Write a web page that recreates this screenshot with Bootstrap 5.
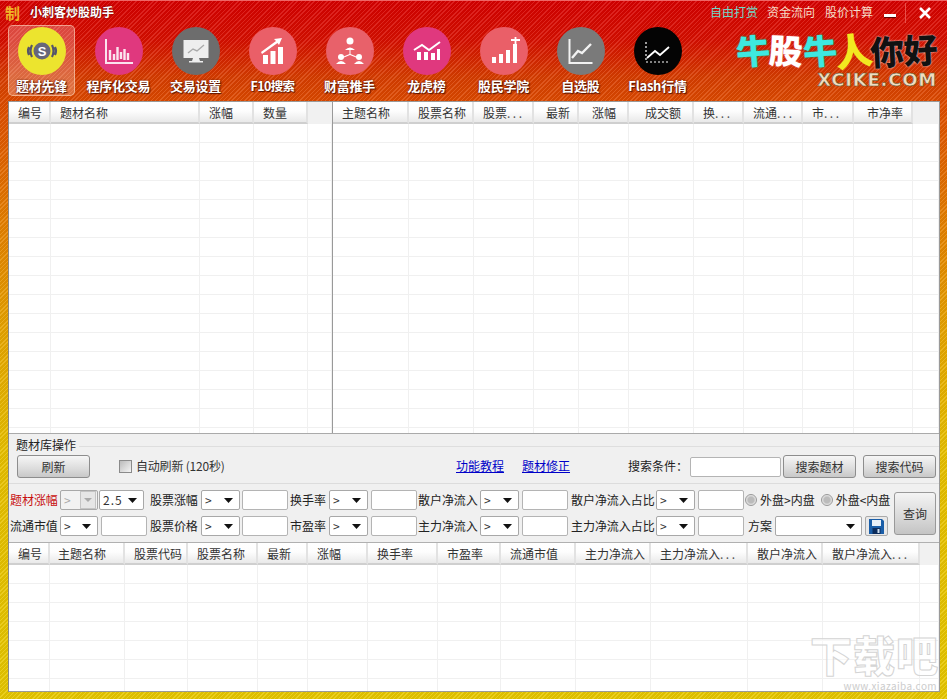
<!DOCTYPE html>
<html lang="zh-CN">
<head>
<meta charset="utf-8">
<title>小刺客炒股助手</title>
<link rel="stylesheet" href="https://cdn.jsdelivr.net/npm/bootstrap@5.3.0/dist/css/bootstrap.min.css">
<style>
html,body{margin:0;height:699px;overflow:hidden;background:#e8c800}
body{font-family:"Liberation Sans","Noto Sans CJK SC",sans-serif;font-size:12px;color:#222;line-height:1.2}
.cjk{font-family:"Noto Sans CJK SC","Liberation Sans",sans-serif}
.appwin{width:947px;height:699px;position:relative;border-top:1px solid #e66;
 background:repeating-linear-gradient(135deg,rgba(255,255,255,.12) 0 1px,rgba(0,0,0,.05) 1px 3px),linear-gradient(180deg,#d80000 0,#d81000 40px,#d83c00 75px,#e05000 110px,#e68000 220px,#e8a800 340px,#e8c000 450px,#e8c800 699px)}
.titlebar{height:23px;padding-left:5px;flex:none}
.titleglyph{width:17px;font-size:15px;font-weight:700;line-height:16px;color:#f0b428;white-space:nowrap}
.titletext{margin-left:8px;color:#fff;font-weight:700;font-size:12px;text-shadow:0 0 2px #400}
.toplink{color:#f5dcc8;margin-right:10px;font-size:12px;text-decoration:none}
.toplink.teal{color:#6fd8c8;margin-left:2px;margin-right:9px}
.winmin{width:12px;height:3px;background:#fff;margin-top:5px;margin-left:1px;box-shadow:0 1px 1px #500}
.winsep{width:1px;height:20px;background:#e8504a;margin-left:9px;margin-right:13px}
.toolbar{height:77px;padding-left:8px;flex:none}
.toolfirst{width:67px;height:71px;margin-top:1px;border-radius:5px;border:1px solid rgba(255,225,200,.55);background:rgba(255,235,225,.28)}
.toolfirst .iconsvg{margin-top:1px}
.toolitem{width:77px;height:71px;margin-top:1px;padding-top:2px}
.toolitem1{margin-left:5px}
.iconsvg{width:48px;height:48px;display:block;flex:none}
.toollabel{margin-top:3px;color:#fff;font-weight:700;font-size:13px;letter-spacing:-.25px;white-space:nowrap;text-shadow:0 0 2px #5a1500,1px 1px 1px #5a1500}
.toollabel.tight{letter-spacing:-.6px;font-size:12.500px}
.logobox{width:201px;margin-left:auto;height:72px;margin-right:10px;margin-top:6px}
.logorow{font-size:34px;font-weight:900;line-height:40px;letter-spacing:-.6px;white-space:nowrap}
.lg1{color:#3ee8e0;text-shadow:0 0 2px #0a6;display:inline-block;transform:rotate(-4deg)}
.lg2{color:#fff;text-shadow:0 0 2px #e77;display:inline-block;transform:rotate(3deg)}
.lg3{color:#f2e820;display:inline-block;transform:rotate(-8deg) scale(1.1)}
.lg4{color:#111;text-shadow:0 0 2px #fff;display:inline-block;transform:rotate(-3deg)}
.logosub{font-family:"DejaVu Sans",sans-serif;font-weight:700;font-size:18px;line-height:20px;color:#f0dcc0;letter-spacing:.8px;-webkit-text-stroke:.5px #553;text-align:right}
.mainpanel{width:932px;height:591px;margin-left:8px;background:#f0f0f0;border:1px solid #999;border-left-color:#888;flex:none}
.toppane{height:332px;border-bottom:1px solid #aaa;flex:none;background:#fff;overflow:hidden}
.paneleft{width:324px;border-right:1px solid #999;flex:none;overflow:hidden}
.paneright{width:606px;flex:none;overflow:hidden}
.gridtb.table{table-layout:fixed;margin:0;border-collapse:separate;border-spacing:0;--bs-table-bg:transparent;color:#333}
.gridtb.table>:not(caption)>*>*{padding:0;border:0;box-shadow:none}
.gridtb.table>thead>tr>th{height:22px;font-weight:400;font-size:12px;padding:2px 0 0 9px;white-space:nowrap;overflow:hidden;vertical-align:middle;background:linear-gradient(180deg,#fff 0,#fdfdfd 45%,#e9e9e9 100%);border-right:2px solid #e2e2e2;border-bottom:2px solid #cfcfcf}
.gridtb.table>thead>tr>th.blankhd{background:#f1f1f1;border-right:0;border-bottom:0}
.gridtb.table>tbody>tr>td{height:19px;border-right:1px solid #f0f0f0;border-bottom:1px solid #f0f0f0}
.gridtb.table>thead>tr>th.pl12{padding-left:12px}
.gridtb.table>thead>tr>th.pl13{padding-left:13px}
.gridtb.table>thead>tr>th.pl16{padding-left:16px}
.gridtb.table>thead>tr>th.pl8{padding-left:8px}
.dots{letter-spacing:2.500px;color:#555}
.opsbox{height:50px;border-bottom:1px solid #dcdcdc;flex:none}
.opshead{height:21px;padding:4px 0 0 7px;color:#222}
.opsline{height:1px;background:#dedede;margin:8px 0 0 3px}
.opsrow{height:23px;padding-left:8px;white-space:nowrap}
.flatbtn.btn{font-size:12px;padding:0;height:23px;width:73px;flex:none;color:#333;border:1px solid #8d8d8d;border-radius:3px;background:linear-gradient(180deg,#f6f6f6,#dcdcdc 60%,#c8c8c8);line-height:20px}
.chkbox.form-check-input{width:13px;height:13px;margin:0 4px 0 29px;border:1px solid #8a8a8a;border-radius:0;background:linear-gradient(135deg,#bbb,#f4f4f4);flex:none}
.autotxt{color:#333;width:88px;flex:none;letter-spacing:-.2px}
.opslink{color:#0000c8;text-decoration:underline;width:48px;flex:none}
.lk1{margin-left:232px}
.lk2{margin-left:18px}
.searchlbl{margin-left:58px;width:62px;flex:none;color:#222}
.txtinp.form-control{height:20px;min-height:0;padding:0 2px;border:1px solid #b4b4b4;border-radius:2px;font-size:12px;background:#fff;box-shadow:none}
.searchinp.form-control{width:91px;flex:none}
.sp2{margin-left:2px}.sp7{margin-left:7px}
.filterbox{height:58px;padding:6px 0 6px 1px;flex:none}
.filtergrid{display:grid;grid-template-columns:50px 90px 51px 39px 50px 39px 39px 50px 62px 39px 52px 85px 39px 50px 145px;grid-template-rows:20px 20px;row-gap:6px;align-items:center;white-space:nowrap}
.flbl{color:#222;letter-spacing:-.05px}
.flbl.redl{color:#c81010}
.minisel.form-select{height:20px;min-height:0;width:100%;padding:0 0 0 3px;font-size:12px;border:1px solid #a8a8a8;border-radius:2px;color:#333;box-shadow:none;
 background-color:#fff;background-position:right 6px center;background-size:9px 5px;background-repeat:no-repeat;
 background-image:url("data:image/svg+xml,%3Csvg xmlns='http://www.w3.org/2000/svg' viewBox='0 0 9 5'%3E%3Cpath d='M0 0h9L4.500 5z' fill='%23111'/%3E%3C/svg%3E")}
.minisel.form-select:disabled{background-color:#f2f2f2;color:#aaa;background-position:right 1px center;background-size:16px 18px;
 background-image:url("data:image/svg+xml,%3Csvg xmlns='http://www.w3.org/2000/svg' viewBox='0 0 16 18'%3E%3Crect x='.5' y='.5' width='15' height='17' fill='%23e6e6e6' stroke='%23c4c4c4'/%3E%3Cpath d='M4 7h8l-4 4z' fill='%23aaa'/%3E%3C/svg%3E")}
.selwide.form-select{width:45px;margin-left:1px;letter-spacing:1px;flex:none}
.selnarrow.form-select{width:38px;flex:none}
.firstcell{width:88px}
.inp46.form-control{width:46px;flex:none}
.inpl2{margin-left:2px}.inpl3{margin-left:3px}
.radbtn.form-check-input{width:12px;height:12px;margin:0 3px 0 0;border:1px solid #999;background:radial-gradient(circle,#bbb 0 40%,#e8e8e8 70%);flex:none}
.radbtn2.form-check-input{margin-left:6px}
.fanlbl{margin-left:3px;width:27px}
.planset.form-select{width:87px;flex:none}
.savebtn{width:23px;height:20px;margin-left:3px;border:1px solid #aaa;border-radius:2px;background:#e8e8e8;flex:none}
.querybtn.btn{width:42px;height:43px;margin:2px 0 0 4px;font-size:12px;padding:0;color:#333;border:1px solid #999;border-radius:3px;background:linear-gradient(180deg,#f4f4f4,#d8d8d8 60%,#c4c4c4);flex:none}
.botpane{border-top:1px solid #b0b0b0;background:#fff;overflow:hidden;flex:1 1 auto;min-height:0}
.wmark{right:0;bottom:0;width:134px;pointer-events:none;text-align:right}
.wmarktext{font-size:42px;font-weight:900;line-height:46px;height:46px;overflow:visible;color:rgba(255,255,255,.5);-webkit-text-stroke:1px #d4d4d4;white-space:nowrap;letter-spacing:1px}
.wmarkurl{font-size:10px;line-height:11px;margin-top:3px;color:#ccc;letter-spacing:.4px;white-space:nowrap;padding-right:2px}
</style>
</head>
<body>
<div class="appwin d-flex flex-column cjk">
  <div class="titlebar d-flex align-items-center">
    <span class="titleglyph">制</span>
    <span class="titletext">小刺客炒股助手</span>
    <div class="ms-auto d-flex align-items-center">
      <a class="toplink teal" href="#">自由打赏</a>
      <a class="toplink" href="#">资金流向</a>
      <a class="toplink" href="#">股价计算</a>
      <div class="winmin"></div>
      <div class="winsep"></div>
      <svg class="me-3" width="12" height="12" viewBox="0 0 12 12"><path d="M1 1l10 10M11 1L1 11" stroke="#fff" stroke-width="2.600"/></svg>
    </div>
  </div>

  <div class="toolbar d-flex align-items-start">
    <div class="toolfirst d-flex flex-column align-items-center">
      <svg class="iconsvg" viewBox="0 0 48 48"><circle cx="24" cy="24" r="24" fill="#ece42e"/><circle cx="24" cy="24" r="8.500" fill="#66667a"/><text x="24" y="28.500" text-anchor="middle" font-family="Liberation Sans" font-weight="700" font-size="13" fill="#fff">S</text><path d="M14 18q-3 6 0 12M11 20q-2 4 0 8M34 18q3 6 0 12M37 20q2 4 0 8" fill="none" stroke="#55556a" stroke-width="2.200"/></svg>
      <div class="toollabel">题材先锋</div>
    </div>
    <div class="toolitem toolitem1 d-flex flex-column align-items-center">
      <svg class="iconsvg" viewBox="0 0 48 48"><circle cx="24" cy="24" r="24" fill="#e0387e"/><path d="M11 12v24h27" fill="none" stroke="#fbe4ee" stroke-width="2"/><path d="M15 23v10M19 27v6M22.500 20v13M26 25v7M29.500 22v11M33 26v7" stroke="#fbe4ee" stroke-width="2.400"/></svg>
      <div class="toollabel">程序化交易</div>
    </div>
    <div class="toolitem d-flex flex-column align-items-center">
      <svg class="iconsvg" viewBox="0 0 48 48"><circle cx="24" cy="24" r="24" fill="#6d6d6d"/><rect x="11.500" y="13" width="25" height="18" fill="#eee"/><path d="M16 26l5-4 4 2 7-6" fill="none" stroke="#aaa" stroke-width="1.400"/><path d="M21 31h6l1 3h3v1.500H17V34h3z" fill="#eee"/></svg>
      <div class="toollabel">交易设置</div>
    </div>
    <div class="toolitem d-flex flex-column align-items-center">
      <svg class="iconsvg" viewBox="0 0 48 48"><circle cx="24" cy="24" r="24" fill="#ea5f68"/><path d="M14 28h5v9h-5zM21.500 24h5v13h-5zM29 20h5v17h-5z" fill="#fff"/><path d="M12 25l15-11-2-2 8-1-3 7-1.500-2L13 27z" fill="#fff"/></svg>
      <div class="toollabel tight">F10搜索</div>
    </div>
    <div class="toolitem d-flex flex-column align-items-center">
      <svg class="iconsvg" viewBox="0 0 48 48"><circle cx="24" cy="24" r="24" fill="#e8616a"/><circle cx="24" cy="14" r="3.500" fill="#fff"/><path d="M19 23q5-5 10 0zM23.500 23h1v4l7 3-.4 1-7.100-3-7.100 3-.4-1 7-3z" fill="#fff"/><circle cx="15" cy="30" r="3" fill="#fff"/><circle cx="33" cy="30" r="3" fill="#fff"/><path d="M10 37q5-6 10 0zM28 37q5-6 10 0z" fill="#fff"/></svg>
      <div class="toollabel">财富推手</div>
    </div>
    <div class="toolitem d-flex flex-column align-items-center">
      <svg class="iconsvg" viewBox="0 0 48 48"><circle cx="24" cy="24" r="24" fill="#e0387e"/><path d="M11 23l8-5 7 5 11-8" fill="none" stroke="#fff" stroke-width="2"/><path d="M14 25h4v8h-4zM21 25h4v8h-4zM28 26h4v7h-4zM34 22h3v11h-3z" fill="#fff"/></svg>
      <div class="toollabel">龙虎榜</div>
    </div>
    <div class="toolitem d-flex flex-column align-items-center">
      <svg class="iconsvg" viewBox="0 0 48 48"><circle cx="24" cy="24" r="24" fill="#ea5f68"/><path d="M12 30h4v6h-4zM19 27h4v9h-4zM26 23h4v13h-4zM33 17h4v19h-4z" fill="#fff"/><path d="M31 13h9M35.500 10v7" stroke="#fff" stroke-width="1.800"/></svg>
      <div class="toollabel">股民学院</div>
    </div>
    <div class="toolitem d-flex flex-column align-items-center">
      <svg class="iconsvg" viewBox="0 0 48 48"><circle cx="24" cy="24" r="24" fill="#7a7a7a"/><path d="M12.500 12v24h23" fill="none" stroke="#f2f2f2" stroke-width="2"/><path d="M15 31l6-7 4 2 9-9" fill="none" stroke="#f2f2f2" stroke-width="2.400"/></svg>
      <div class="toollabel">自选股</div>
    </div>
    <div class="toolitem d-flex flex-column align-items-center">
      <svg class="iconsvg" viewBox="0 0 48 48"><circle cx="24" cy="24" r="24" fill="#040404"/><path d="M12 15v20h24" fill="none" stroke="#fff" stroke-width="1.200" stroke-dasharray="2 2"/><path d="M13 31l8-7 5 4 9-8" fill="none" stroke="#fff" stroke-width="1.800"/></svg>
      <div class="toollabel">Flash行情</div>
    </div>
    <div class="logobox">
      <div class="logorow"><span class="lg1">牛</span><span class="lg2">股</span><span class="lg1">牛</span><span class="lg3">人</span><span class="lg4">你好</span></div>
      <div class="logosub">XCIKE.COM</div>
    </div>
  </div>

  <div class="mainpanel d-flex flex-column position-relative">
    <div class="toppane d-flex">
      <div class="paneleft">
        <table class="table gridtb" data-rows="17">
          <colgroup><col width="42"><col width="149"><col width="54"><col width="54"><col width="24"></colgroup>
          <thead><tr><th>编号</th><th>题材名称</th><th>涨幅</th><th>数量</th><th class="blankhd"></th></tr></thead>
          <tbody></tbody>
        </table>
      </div>
      <div class="paneright">
        <table class="table gridtb" data-rows="17">
          <colgroup><col width="76"><col width="65"><col width="60"><col width="45"><col width="50"><col width="65"><col width="50"><col width="59"><col width="51"><col width="59"><col width="26"></colgroup>
          <thead><tr><th>主题名称</th><th>股票名称</th><th>股票<span class="dots">...</span></th><th class="pl12">最新</th><th class="pl13">涨幅</th><th class="pl16">成交额</th><th>换<span class="dots">...</span></th><th>流通<span class="dots">...</span></th><th>市<span class="dots">...</span></th><th class="pl13">市净率</th><th class="blankhd"></th></tr></thead>
          <tbody></tbody>
        </table>
      </div>
    </div>

    <div class="opsbox">
      <div class="opshead d-flex"><span>题材库操作</span><div class="opsline flex-grow-1"></div></div>
      <div class="opsrow d-flex align-items-center">
        <button type="button" class="btn flatbtn">刷新</button>
        <input class="form-check-input chkbox" type="checkbox">
        <span class="autotxt">自动刷新 (120秒)</span>
        <a class="opslink lk1" href="#">功能教程</a>
        <a class="opslink lk2" href="#">题材修正</a>
        <span class="searchlbl">搜索条件：</span>
        <input class="form-control txtinp searchinp" type="text">
        <button type="button" class="btn flatbtn sp2">搜索题材</button>
        <button type="button" class="btn flatbtn sp7">搜索代码</button>
      </div>
    </div>

    <div class="filterbox d-flex">
      <div class="filtergrid">
        <span class="flbl redl">题材涨幅</span>
        <div class="d-flex firstcell"><select class="form-select minisel selnarrow" disabled><option>&gt;</option></select><select class="form-select minisel selwide"><option>2.5</option></select></div>
        <span class="flbl">股票涨幅</span>
        <select class="form-select minisel"><option>&gt;</option></select>
        <input class="form-control txtinp inp46 inpl2" type="text">
        <span class="flbl">换手率</span>
        <select class="form-select minisel"><option>&gt;</option></select>
        <input class="form-control txtinp inp46 inpl3" type="text">
        <span class="flbl">散户净流入</span>
        <select class="form-select minisel"><option>&gt;</option></select>
        <input class="form-control txtinp inp46 inpl3" type="text">
        <span class="flbl">散户净流入占比</span>
        <select class="form-select minisel"><option>&gt;</option></select>
        <input class="form-control txtinp inp46 inpl3" type="text">
        <div class="d-flex align-items-center"><input class="form-check-input radbtn" type="radio" name="pan"><span>外盘&gt;内盘</span><input class="form-check-input radbtn radbtn2" type="radio" name="pan"><span>外盘&lt;内盘</span></div>

        <span class="flbl">流通市值</span>
        <div class="d-flex firstcell"><select class="form-select minisel selnarrow"><option>&gt;</option></select><input class="form-control txtinp inp46 inpl3" type="text"></div>
        <span class="flbl">股票价格</span>
        <select class="form-select minisel"><option>&gt;</option></select>
        <input class="form-control txtinp inp46 inpl2" type="text">
        <span class="flbl">市盈率</span>
        <select class="form-select minisel"><option>&gt;</option></select>
        <input class="form-control txtinp inp46 inpl3" type="text">
        <span class="flbl">主力净流入</span>
        <select class="form-select minisel"><option>&gt;</option></select>
        <input class="form-control txtinp inp46 inpl3" type="text">
        <span class="flbl">主力净流入占比</span>
        <select class="form-select minisel"><option>&gt;</option></select>
        <input class="form-control txtinp inp46 inpl3" type="text">
        <div class="d-flex align-items-center"><span class="fanlbl">方案</span><select class="form-select minisel planset"><option></option></select>
          <div class="savebtn d-flex align-items-center justify-content-center"><svg width="15" height="15" viewBox="0 0 15 15"><path d="M0 0h13l2 2v13H0z" fill="#1a5ea8"/><rect x="3" y="1" width="9" height="6" fill="#e8f0f8"/><rect x="3.500" y="9" width="8" height="6" fill="#0c2c5c"/><rect x="8.500" y="10" width="2" height="4" fill="#cfe0f0"/></svg></div>
        </div>
      </div>
      <button type="button" class="btn querybtn">查询</button>
    </div>

    <div class="botpane">
      <table class="table gridtb" data-rows="7">
        <colgroup><col width="41"><col width="75"><col width="63"><col width="70"><col width="50"><col width="60"><col width="70"><col width="63"><col width="75"><col width="75"><col width="97"><col width="75"><col width="97"><col width="19"></colgroup>
        <thead><tr><th>编号</th><th class="pl8">主题名称</th><th>股票代码</th><th>股票名称</th><th>最新</th><th>涨幅</th><th>换手率</th><th>市盈率</th><th>流通市值</th><th>主力净流入</th><th>主力净流入<span class="dots">...</span></th><th>散户净流入</th><th>散户净流入<span class="dots">...</span></th><th class="blankhd"></th></tr></thead>
        <tbody></tbody>
      </table>
    </div>

    <div class="wmark position-absolute">
      <div class="wmarktext">下载吧</div>
      <div class="wmarkurl">www.xiazaiba.com</div>
    </div>
  </div>
</div>
<script>
document.querySelectorAll('table[data-rows]').forEach(function(t){
  var n=t.querySelectorAll('thead th').length,b=t.querySelector('tbody'),h='';
  for(var i=0;i<+t.dataset.rows;i++){h+='<tr>'+'<td></td>'.repeat(n)+'</tr>';}
  b.innerHTML=h;
});
</script>
<script src="https://cdn.jsdelivr.net/npm/bootstrap@5.3.0/dist/js/bootstrap.bundle.min.js"></script>
</body>
</html>
